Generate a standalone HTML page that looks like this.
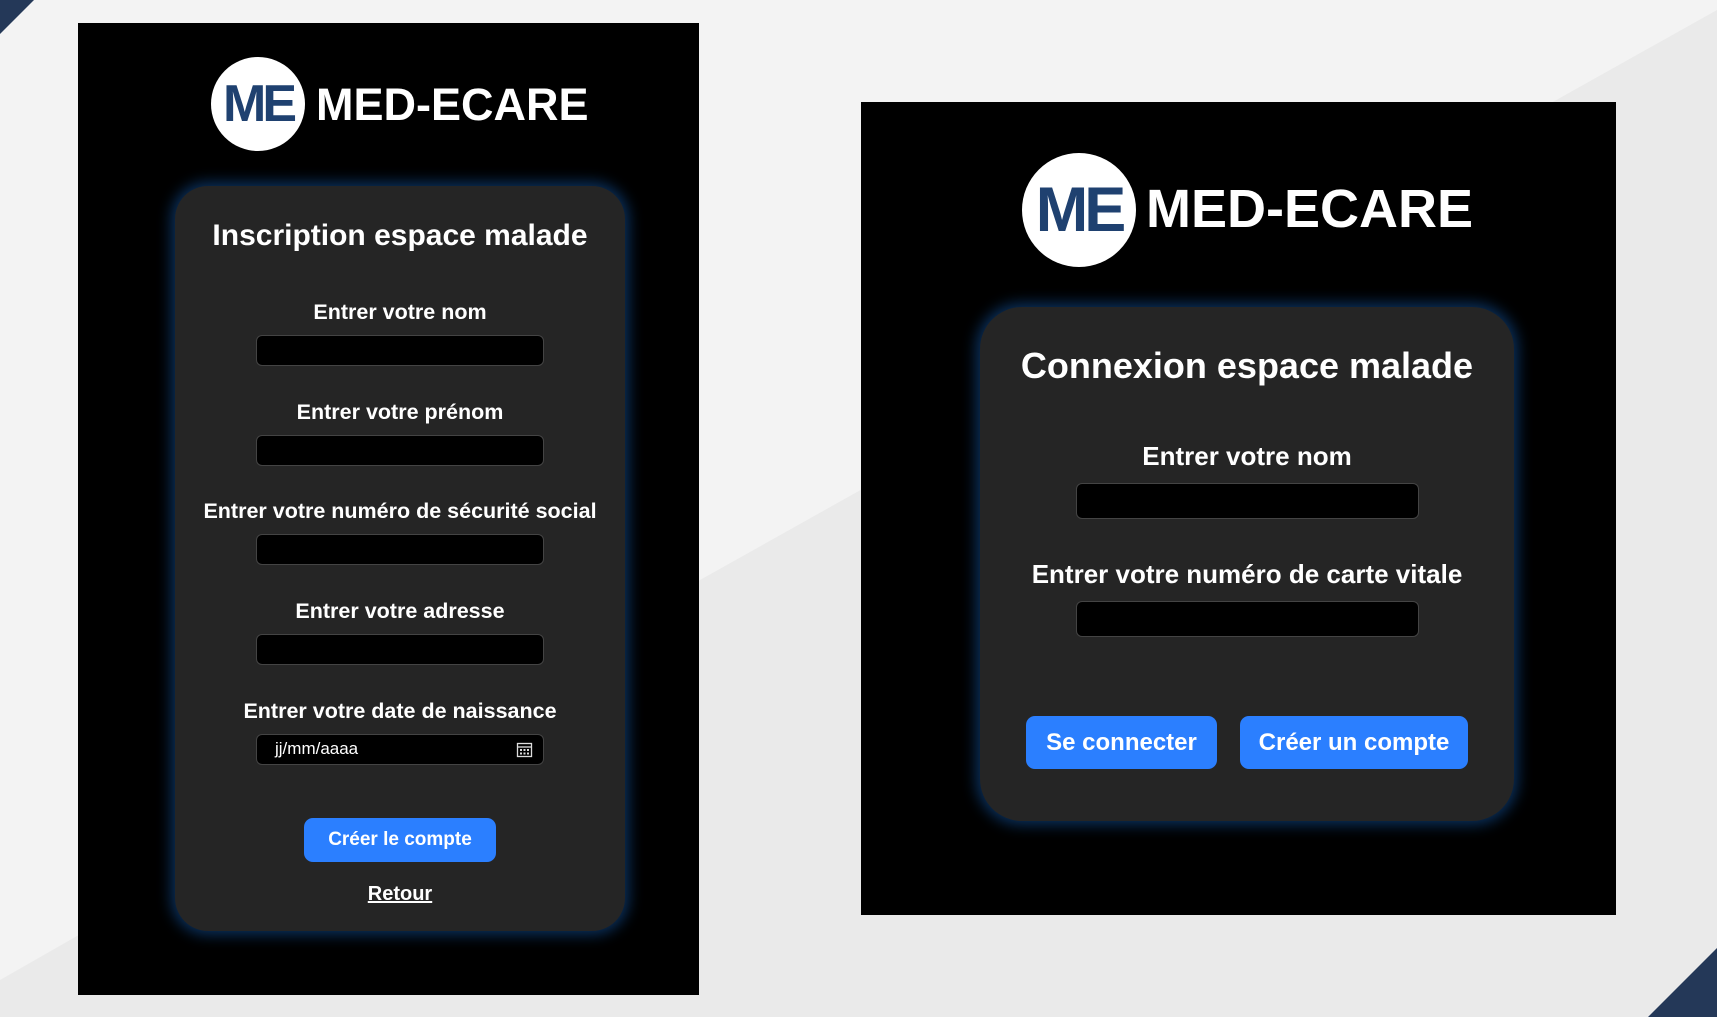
<!DOCTYPE html>
<html><head><meta charset="utf-8"><style>
*{margin:0;padding:0;box-sizing:border-box}
body{width:1717px;height:1017px;position:relative;overflow:hidden;background:#f3f3f3;font-family:"Liberation Sans",sans-serif;color:#fff;font-weight:bold}
.abs{position:absolute}
.panel{position:absolute;background:#000}
.card{position:absolute;background:#252525;box-shadow:0 0 14px 4px rgba(20,90,170,.55)}
.c{position:absolute;text-align:center;white-space:nowrap}
.inp{position:absolute;background:#000;border:1.5px solid #444;border-radius:6px}
.btn{position:absolute;background:#2b7fff;border-radius:9px;display:flex;align-items:center;justify-content:center}
.logo{position:absolute;background:#fff;border-radius:50%;display:flex;align-items:center;justify-content:center;color:#1f4170;letter-spacing:-4px;font-weight:bold}
</style></head><body>
<svg class="abs" style="left:0;top:0" width="1717" height="1017">
<polygon points="0,980 700,580 1717,10 1717,1017 0,1017" fill="#eaeaea"/>
<polygon points="0,0 34,0 0,34" fill="#243858"/>
<polygon points="1648,1017 1717,948 1717,1017" fill="#243858"/>
</svg>

<div class="panel" style="left:78px;top:23px;width:621px;height:972px"></div>
<div class="logo" style="left:211px;top:57px;width:94px;height:94px;font-size:52px">ME</div>
<div class="abs" style="left:316px;top:79px;font-size:45px;line-height:52px">MED-ECARE</div>
<div class="card" style="left:175px;top:186px;width:450px;height:745px;border-radius:33px"></div>
<div class="c" style="left:175px;width:450px;top:219px;font-size:30px">Inscription espace malade</div>
<div class="c" style="left:175px;width:450px;top:300px;font-size:21.5px">Entrer votre nom</div>
<div class="inp" style="left:256px;top:335px;width:288px;height:31px"></div>
<div class="c" style="left:175px;width:450px;top:400px;font-size:21.5px">Entrer votre prénom</div>
<div class="inp" style="left:256px;top:435px;width:288px;height:31px"></div>
<div class="c" style="left:175px;width:450px;top:499px;font-size:21.5px">Entrer votre numéro de sécurité social</div>
<div class="inp" style="left:256px;top:534px;width:288px;height:31px"></div>
<div class="c" style="left:175px;width:450px;top:599px;font-size:21.5px">Entrer votre adresse</div>
<div class="inp" style="left:256px;top:634px;width:288px;height:31px"></div>
<div class="c" style="left:175px;width:450px;top:699px;font-size:21.5px">Entrer votre date de naissance</div>
<div class="inp" style="left:256px;top:734px;width:288px;height:31px"></div>
<div class="abs" style="left:275px;top:739px;font-size:17px;font-weight:normal">jj/mm/aaaa</div>
<svg class="abs" style="left:516px;top:741px" width="17" height="17" viewBox="0 0 17 17"><rect x="1.5" y="2.5" width="14" height="13" fill="none" stroke="#ddd" stroke-width="1.3"/><line x1="1.5" y1="6" x2="15.5" y2="6" stroke="#ddd" stroke-width="1.3"/><g fill="#ddd"><rect x="4" y="8" width="2" height="2"/><rect x="7.5" y="8" width="2" height="2"/><rect x="11" y="8" width="2" height="2"/><rect x="4" y="11.5" width="2" height="2"/><rect x="7.5" y="11.5" width="2" height="2"/><rect x="11" y="11.5" width="2" height="2"/></g></svg>
<div class="btn" style="left:304px;top:818px;width:192px;height:44px;font-size:19px">Créer le compte</div>
<div class="c" style="left:175px;width:450px;top:883px;font-size:20px;text-decoration:underline">Retour</div>

<div class="panel" style="left:861px;top:102px;width:755px;height:813px"></div>
<div class="logo" style="left:1022px;top:153px;width:114px;height:114px;font-size:63px">ME</div>
<div class="abs" style="left:1146px;top:178px;font-size:54px;line-height:62px">MED-ECARE</div>
<div class="card" style="left:980px;top:307px;width:534px;height:514px;border-radius:42px"></div>
<div class="c" style="left:980px;width:534px;top:345px;font-size:36px">Connexion espace malade</div>
<div class="c" style="left:980px;width:534px;top:441px;font-size:26px">Entrer votre nom</div>
<div class="inp" style="left:1076px;top:483px;width:343px;height:36px"></div>
<div class="c" style="left:980px;width:534px;top:559px;font-size:26px">Entrer votre numéro de carte vitale</div>
<div class="inp" style="left:1076px;top:601px;width:343px;height:36px"></div>
<div class="btn" style="left:1026px;top:716px;width:191px;height:53px;font-size:24px">Se connecter</div>
<div class="btn" style="left:1240px;top:716px;width:228px;height:53px;font-size:24px">Créer un compte</div>
</body></html>
